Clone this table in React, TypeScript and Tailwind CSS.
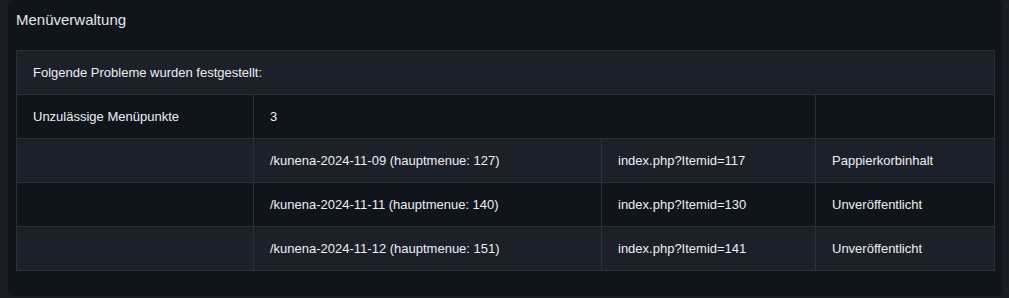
import React from "react";

const rows = [
  ["/kunena-2024-11-09 (hauptmenue: 127)", "index.php?Itemid=117", "Pappierkorbinhalt"],
  ["/kunena-2024-11-11 (hauptmenue: 140)", "index.php?Itemid=130", "Unveröffentlicht"],
  ["/kunena-2024-11-12 (hauptmenue: 151)", "index.php?Itemid=141", "Unveröffentlicht"],
];

export default function App() {
  return (
    <div
      className="w-[1009px] h-[298px] bg-[#191c22] overflow-hidden"
      style={{ fontFamily: '"Liberation Sans", Arial, sans-serif' }}
    >
      <div className="ml-[8px] mr-[7px] h-[296px] bg-[#10151c] rounded-[5px] pt-[9px] px-[8px]">
        <h1 className="text-[15px] leading-[22px] text-[#e3e6ea] font-normal">Menüverwaltung</h1>
        <table className="mt-[19px] w-[978px] border-collapse text-[13px] text-[#eceef1] table-fixed">
          <colgroup>
            <col className="w-[237px]" />
            <col className="w-[348px]" />
            <col className="w-[214px]" />
            <col className="w-[179px]" />
          </colgroup>
          <tbody>
            <tr className="bg-[#1c2129] h-[44px]">
              <td colSpan={4} className="border border-[#2c3139] px-[16px] align-middle">
                Folgende Probleme wurden festgestellt:
              </td>
            </tr>
            <tr className="bg-[#10151c] h-[44px]">
              <td className="border border-[#2c3139] px-[16px] align-middle">Unzulässige Menüpunkte</td>
              <td colSpan={2} className="border border-[#2c3139] px-[16px] align-middle">3</td>
              <td className="border border-[#2c3139] px-[16px] align-middle"></td>
            </tr>
            {rows.map((r, i) => (
              <tr key={i} className={(i % 2 === 0 ? "bg-[#1c2129]" : "bg-[#10151c]") + " h-[44px]"}>
                <td className="border border-[#2c3139] px-[16px] align-middle"></td>
                <td className="border border-[#2c3139] px-[16px] align-middle">{r[0]}</td>
                <td className="border border-[#2c3139] px-[16px] align-middle">{r[1]}</td>
                <td className="border border-[#2c3139] px-[16px] align-middle">{r[2]}</td>
              </tr>
            ))}
          </tbody>
        </table>
      </div>
    </div>
  );
}
